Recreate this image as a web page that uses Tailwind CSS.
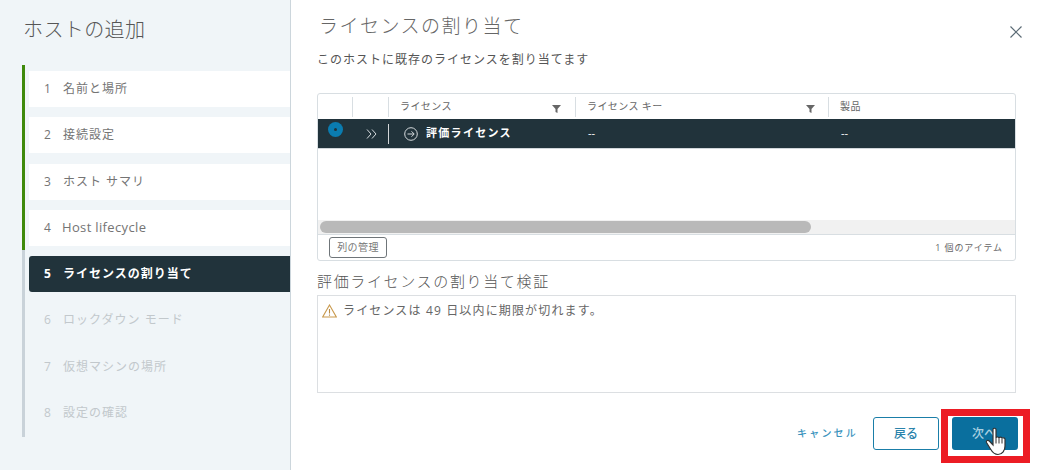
<!DOCTYPE html>
<html lang="ja">
<head>
<meta charset="utf-8">
<script src="https://cdn.jsdelivr.net/npm/@tailwindcss/browser@4"></script>
</head>
<body class="m-0 bg-white font-['Open_Sans','Noto_Sans_CJK_JP',sans-serif]">
<div class="relative flex h-[470px] w-[1039px] overflow-hidden bg-white text-[#565656]">
  <aside class="flex h-full w-[291px] shrink-0 flex-col border-r border-[#ccd6dc] bg-[#f0f5f8]">
    <h1 class="mt-[15px] ml-[23px] text-[20px] leading-[30px] font-light tracking-[0.4px] text-[#565656]">ホストの追加</h1>
    <div class="mt-[20px] ml-[22px] flex h-[372px] border-l-[3px] border-transparent">
      <div class="relative -ml-[3px] flex w-[3px] flex-col">
        <div class="h-[185px] w-[3px] bg-[#3f8a0c]"></div>
        <div class="h-[187px] w-[3px] bg-[#c9d2d9]"></div>
      </div>
      <ol class="mt-[6px] ml-[4px] flex w-[261px] flex-col gap-[10.25px] text-[12px] tracking-[1px]">
        <li class="flex h-[36px] items-center bg-white pl-[15px] text-[#747474]"><span class="w-[19px]">1</span><span>名前と場所</span></li>
        <li class="flex h-[36px] items-center bg-white pl-[15px] text-[#747474]"><span class="w-[19px]">2</span><span>接続設定</span></li>
        <li class="flex h-[36px] items-center bg-white pl-[15px] text-[#747474]"><span class="w-[19px]">3</span><span>ホスト サマリ</span></li>
        <li class="flex h-[36px] items-center bg-white pl-[15px] text-[#747474]"><span class="w-[18px]">4</span><span class="text-[13px] tracking-[0.35px]">Host lifecycle</span></li>
        <li class="flex h-[36px] items-center rounded-l-[3px] bg-[#21333b] pl-[15px] font-bold text-white"><span class="w-[19px]">5</span><span>ライセンスの割り当て</span></li>
        <li class="flex h-[36px] items-center pl-[15px] text-[#c2c8cc]"><span class="w-[19px]">6</span><span>ロックダウン モード</span></li>
        <li class="flex h-[36px] items-center pl-[15px] text-[#c2c8cc]"><span class="w-[19px]">7</span><span>仮想マシンの場所</span></li>
        <li class="flex h-[36px] items-center pl-[15px] text-[#c2c8cc]"><span class="w-[19px]">8</span><span>設定の確認</span></li>
      </ol>
    </div>
  </aside>
  <main class="flex min-w-0 flex-1 flex-col pr-[24px] pl-[26px]">
    <header class="flex items-start justify-between pt-[11px]">
      <h2 class="ml-[2px] text-[19px] leading-[30px] font-light tracking-[1.5px] text-[#666]">ライセンスの割り当て</h2>
      <svg class="mt-[15px] -mr-[7px]" width="12" height="12" viewBox="0 0 12 12" fill="none" stroke="#5b6b75" stroke-width="1.2"><path d="M0.5 0.5 11.5 11.5M11.5 0.5 0.5 11.5"/></svg>
    </header>
    <p class="mt-[9px] text-[12px] leading-[20px] tracking-[1px] text-[#555]">このホストに既存のライセンスを割り当てます</p>
    <section class="mt-[23px] flex h-[168px] w-[699px] flex-col rounded-[3px] border border-[#d8dee2]">
      <div class="flex h-[25px] items-center text-[10px] tracking-[0.4px] text-[#666]">
        <div class="h-[20px] w-[35px] border-r border-[#d8dee2]"></div>
        <div class="h-[20px] w-[36px] border-r border-[#d8dee2]"></div>
        <div class="relative flex h-[20px] w-[187px] items-center border-r border-[#d8dee2] pl-[11px]">ライセンス
          <svg class="absolute top-[8px] right-[14px]" width="9" height="8" viewBox="0 0 9 8" fill="#666"><path d="M0 0H9L5.5 4V8L3.5 7V4Z"/></svg>
        </div>
        <div class="relative flex h-[20px] w-[253px] items-center border-r border-[#d8dee2] pl-[11px]">ライセンス キー
          <svg class="absolute top-[8px] right-[13px]" width="9" height="8" viewBox="0 0 9 8" fill="#666"><path d="M0 0H9L5.5 4V8L3.5 7V4Z"/></svg>
        </div>
        <div class="pl-[11px]">製品</div>
      </div>
      <div class="flex h-[30px] items-center border-b border-[#d0d6da] bg-[#21333b] text-[11px] text-white">
        <div class="flex h-full w-[35px] items-start pt-[3px] pl-[10px]">
          <span class="flex h-[15px] w-[15px] items-center justify-center rounded-full bg-[#0a7cb0]"><span class="h-[3px] w-[3px] rounded-full bg-[#21333b]"></span></span>
        </div>
        <div class="flex h-[20px] w-[36px] items-center justify-end border-r border-white/80 pr-[11px]">
          <svg width="11" height="10" viewBox="0 0 11 10" fill="none" stroke="#d5dadd" stroke-width="1"><path d="M1 0.5 5 5 1 9.5M6 0.5 10 5 6 9.5"/></svg>
        </div>
        <div class="flex w-[187px] items-center pl-[15px] font-bold tracking-[1.3px]">
          <svg class="mr-[8px]" width="14" height="14" viewBox="0 0 14 14" fill="none" stroke="#d5dadd" stroke-width="1"><circle cx="7" cy="7" r="6.3"/><path d="M3.5 7H10M7.5 4.3 10.2 7 7.5 9.7"/></svg>
          評価ライセンス
        </div>
        <div class="w-[253px] pl-[12px]">--</div>
        <div class="pl-[12px]">--</div>
      </div>
      <div class="flex-1"></div>
      <div class="flex h-[15px] items-center border-b border-[#d8dee2] bg-[#f1f1f1] px-[2px]">
        <div class="h-[12px] w-[491px] rounded-full bg-[#b9b9b9]"></div>
      </div>
      <div class="flex h-[25px] items-center justify-between pr-[12px] pl-[11px]">
        <button class="h-[21px] w-[58px] rounded-[3px] border border-[#6f7579] bg-white text-[10px] tracking-[0.4px] text-[#777]">列の管理</button>
        <span class="text-[9px] tracking-[0.9px] text-[#666]">1 個のアイテム</span>
      </div>
    </section>
    <h3 class="mt-[9px] text-[15px] leading-[22px] font-light tracking-[1.65px] text-[#555]">評価ライセンスの割り当て検証</h3>
    <div class="mt-[3px] flex h-[98px] w-[699px] items-start gap-[6px] border border-[#dcdfe2] pt-[7px] pl-[4px] text-[12px] tracking-[1.15px] text-[#666]">
      <svg class="mt-[1px] shrink-0" width="15" height="14" viewBox="0 0 15 14" fill="none" stroke="#c99a4e" stroke-width="1.1"><path d="M7.5 1 14.3 13H0.7Z"/><path d="M7.5 5V9.5M7.5 10.5V11.7" stroke="#b88a45"/></svg>
      <span class="leading-[16px]">ライセンスは 49 日以内に期限が切れます。</span>
    </div>
    <footer class="relative mt-[24px] flex h-[33px] items-center justify-end">
      <button class="mr-[15px] text-[10px] font-medium tracking-[2.2px] text-[#3a93bd]">キャンセル</button>
      <button class="h-[33px] w-[66px] rounded-[3px] border border-[#1a7ea8] bg-white text-[12px] font-medium text-[#2b83ab]">戻る</button>
      <button class="ml-[13px] h-[33px] w-[66px] -mr-[3px] rounded-[3px] bg-[#0a6f9e] pr-[2px] text-[12px] font-medium text-[#a9d0e0]">次へ</button>
      <div class="pointer-events-none absolute -top-[8px] -right-[15px] h-[54px] w-[89px] border-[7px] border-[#ec1c24]"></div>
      <svg class="absolute top-[10px] right-[4px]" width="26" height="29" viewBox="0 0 26 29"><path d="M8 2.5C8 .8 11 .8 11 2.5V11C11 9.6 14 9.6 14 11.2 14 9.8 17 9.8 17 11.6 17 10.4 20 10.6 20 12.2V19C20 23.5 17.5 27.5 13 27.5 9 27.5 7.5 25.5 5.5 22L1.5 15.5C.7 13.8 3 12.5 4.3 14L8 18Z" fill="#fff" stroke="#333" stroke-width="1.2"/><path d="M11 11V16.5M14 11.2V16.5M17 11.6V16.5" stroke="#333" stroke-width="1"/></svg>
    </footer>
  </main>
</div>
</body>
</html>
